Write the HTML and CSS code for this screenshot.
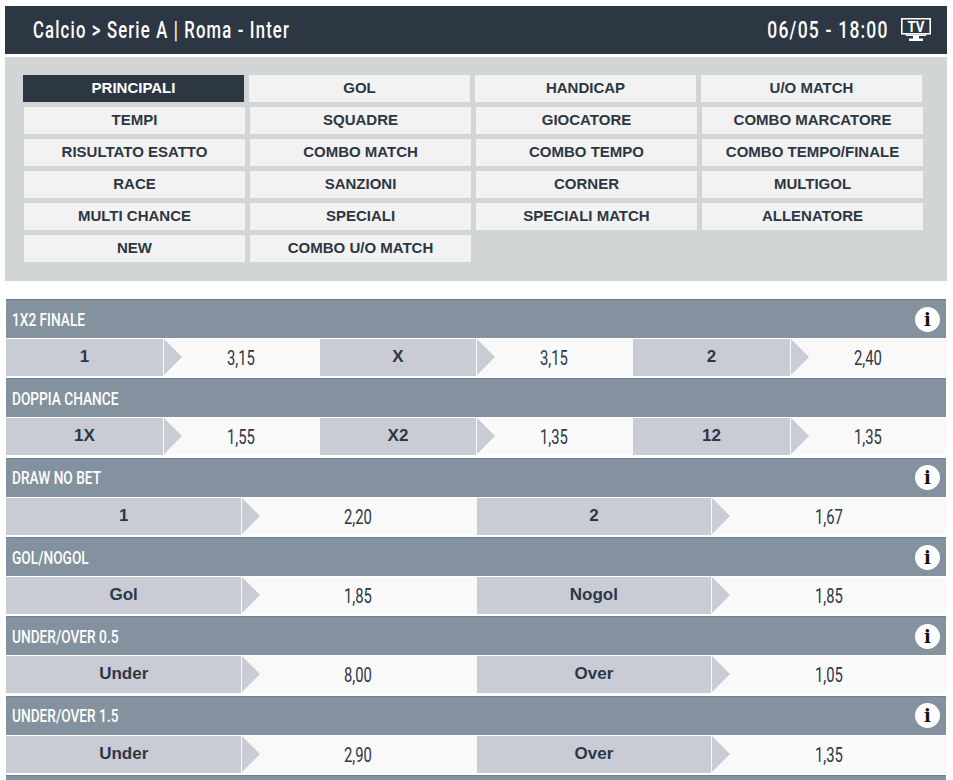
FILE: index.html
```html
<!DOCTYPE html>
<html lang="it">
<head>
    <meta charset="UTF-8">
    <title>Roma - Inter</title>
    <link rel="stylesheet" href="styles.css">
</head>
<body>
    <header class="match-bar">
        <span class="match-name">Calcio &gt; Serie A | Roma - Inter</span>
        <div class="match-time">
            <span class="match-date">06/05 - 18:00</span>
            <svg class="tv-icon" width="30" height="24" viewBox="0 0 30 24">
                <path d="M.8.800h28.400v14.900H.8z" fill="none" stroke="#fff" stroke-width="1.600"/>
                <path d="M3.500 16.500h23l-2 1.500h-19z" fill="#fff"/>
                <path d="M12 18h6v2.500h4V23H8v-2.500h4z" fill="#fff"/>
                <text x="15" y="14" text-anchor="middle" textLength="17" lengthAdjust="spacingAndGlyphs" class="tv-text">TV</text>
            </svg>
        </div>
    </header>

    <!-- Tabs -->
    <nav class="tabs">
        <div class="tab-row tab-row-first">
            <a class="tab active">PRINCIPALI</a>
            <a class="tab">GOL</a>
            <a class="tab">HANDICAP</a>
            <a class="tab">U/O MATCH</a>
        </div>
        <div class="tab-row">
            <a class="tab">TEMPI</a>
            <a class="tab">SQUADRE</a>
            <a class="tab">GIOCATORE</a>
            <a class="tab">COMBO MARCATORE</a>
        </div>
        <div class="tab-row">
            <a class="tab">RISULTATO ESATTO</a>
            <a class="tab">COMBO MATCH</a>
            <a class="tab">COMBO TEMPO</a>
            <a class="tab">COMBO TEMPO/FINALE</a>
        </div>
        <div class="tab-row">
            <a class="tab">RACE</a>
            <a class="tab">SANZIONI</a>
            <a class="tab">CORNER</a>
            <a class="tab">MULTIGOL</a>
        </div>
        <div class="tab-row">
            <a class="tab">MULTI CHANCE</a>
            <a class="tab">SPECIALI</a>
            <a class="tab">SPECIALI MATCH</a>
            <a class="tab">ALLENATORE</a>
        </div>
        <div class="tab-row">
            <a class="tab">NEW</a>
            <a class="tab">COMBO U/O MATCH</a>
        </div>
    </nav>

    <!-- Markets -->
    <main class="markets">
        <section class="market">
            <h3 class="market-title"><span>1X2 FINALE</span> <i class="info">i</i></h3>
            <div class="odds">
                <div class="label">1</div><div class="price"><span>3,15</span></div>
                <div class="label">X</div><div class="price"><span>3,15</span></div>
                <div class="label">2</div><div class="price"><span>2,40</span></div>
            </div>
        </section>
        <section class="market">
            <h3 class="market-title"><span>DOPPIA CHANCE</span></h3>
            <div class="odds">
                <div class="label">1X</div><div class="price"><span>1,55</span></div>
                <div class="label">X2</div><div class="price"><span>1,35</span></div>
                <div class="label">12</div><div class="price"><span>1,35</span></div>
            </div>
        </section>
        <section class="market">
            <h3 class="market-title"><span>DRAW NO BET</span> <i class="info">i</i></h3>
            <div class="odds">
                <div class="label">1</div><div class="price"><span>2,20</span></div>
                <div class="label">2</div><div class="price"><span>1,67</span></div>
            </div>
        </section>
        <section class="market">
            <h3 class="market-title"><span>GOL/NOGOL</span> <i class="info">i</i></h3>
            <div class="odds">
                <div class="label">Gol</div><div class="price"><span>1,85</span></div>
                <div class="label">Nogol</div><div class="price"><span>1,85</span></div>
            </div>
        </section>
        <section class="market">
            <h3 class="market-title"><span>UNDER/OVER 0.5</span> <i class="info">i</i></h3>
            <div class="odds">
                <div class="label">Under</div><div class="price"><span>8,00</span></div>
                <div class="label">Over</div><div class="price"><span>1,05</span></div>
            </div>
        </section>
        <section class="market">
            <h3 class="market-title"><span>UNDER/OVER 1.5</span> <i class="info">i</i></h3>
            <div class="odds">
                <div class="label">Under</div><div class="price"><span>2,90</span></div>
                <div class="label">Over</div><div class="price"><span>1,35</span></div>
            </div>
        </section>
        <section class="market">
            <div class="market-title"></div>
        </section>
    </main>
</body>
</html>
```

FILE: styles.css
```css
html, body {
    height: 780px;
    overflow: hidden;
}

body {
    margin: 0;
    padding: 6px 6px 0 5px;
    box-sizing: border-box;
    background-color: #fff;
    color: #2d3744;
    font-family: 'Liberation Sans', Arial, sans-serif;
}

.match-bar {
    display: flex;
    justify-content: space-between;
    align-items: center;
    height: 48px;
    padding: 0 16px 0 28px;
    background-color: #2d3744;
    color: #fff;
    font-family: 'Roboto', sans-serif;
    font-size: 23px;
    font-weight: 500;
    letter-spacing: 1.6px;
}

/* Roboto is wider than the condensed face, so the text is squeezed */
.match-name {
    transform: scaleX(0.725);
    transform-origin: left center;
}

.match-time {
    display: flex;
    align-items: center;
    gap: 13px;
}

.match-date {
    transform: translateX(1px) scaleX(0.76);
    transform-origin: right center;
}

.tv-text {
    fill: #fff;
    font-size: 15px;
    font-weight: bold;
    letter-spacing: 0;
}

/* Tabs */
.tabs {
    display: flex;
    flex-direction: column;
    gap: 5px;
    height: 224px;
    box-sizing: border-box;
    margin-top: 3px;
    padding: 18px 0 0 19px;
    background-color: #d1d5d6;
}

.tab-row {
    display: flex;
    gap: 5px;
}

.tab-row-first {
    margin-left: -1px;
}

.tab {
    width: 221px;
    height: 27px;
    line-height: 26px;
    text-align: center;
    background-color: #f2f2f2;
    font-size: 15px;
    font-weight: bold;
}

.tab.active {
    background-color: #2d3744;
    color: #fff;
}

/* Markets */
.markets {
    width: 940.4px;
    margin: 18.2px 0 0 1.4px;
}

.market {
    height: 79.3px;
}

.market-title {
    display: flex;
    justify-content: space-between;
    align-items: center;
    box-sizing: border-box;
    height: 39px;
    margin: 0 0.8px 0 0;
    padding: 0 6px;
    border-top: 1px solid #6d8196;
    background-color: #83929e;
    color: #fff;
    font-family: 'Roboto', sans-serif;
    font-size: 19px;
    font-weight: 500;
}

.market-title span {
    transform: scaleX(0.72);
    transform-origin: left center;
}

.info {
    width: 25px;
    height: 25px;
    line-height: 25px;
    border-radius: 50%;
    background-color: #fff;
    color: #111;
    text-align: center;
    font-family: 'DejaVu Serif', serif;
    font-size: 18px;
    font-style: normal;
    font-weight: bold;
}

.odds {
    display: flex;
    height: 37px;
    margin-top: 1px;
}

.label {
    flex: 1;
    line-height: 36px;
    text-align: center;
    background-color: #c9ccd4;
    font-size: 17px;
    font-weight: bold;
}

.price {
    position: relative;
    flex: 1;
    box-sizing: border-box;
    padding-right: 1px;
    line-height: 39px;
    text-align: center;
    background-color: #f9f9f9;
    font-family: 'Roboto', sans-serif;
    font-size: 20px;
}

.price span {
    display: inline-block;
    transform: scaleX(0.74);
}

/* arrow between label and price */
.price::before {
    content: "";
    position: absolute;
    top: 0;
    left: 1px;
    border-style: solid;
    border-width: 18.500px 0 18.500px 18px;
    border-color: transparent transparent transparent #c9ccd4;
}
```
